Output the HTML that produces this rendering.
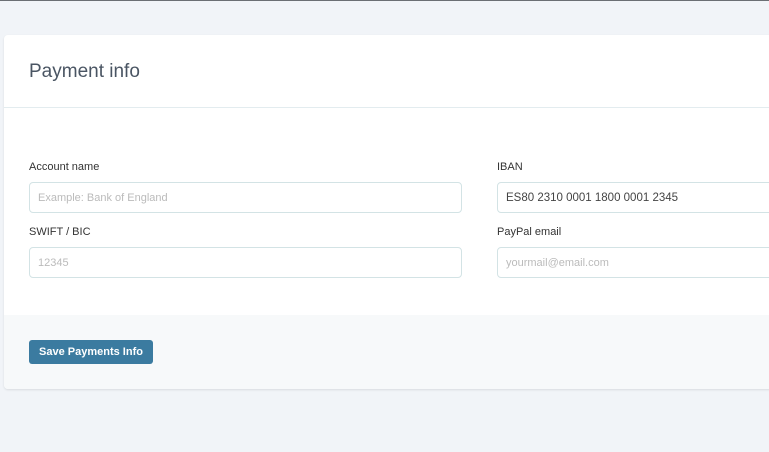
<!DOCTYPE html><html><head><style>
body{margin:0;width:769px;height:452px;background:#f1f4f8;font-family:"Liberation Sans",sans-serif;position:relative;overflow:hidden;border-top:1px solid #6b6f74;box-sizing:border-box}
.card{position:absolute;left:4px;top:34px;width:800px;height:354px;background:#fff;border-radius:4px;box-shadow:0 1px 2px rgba(0,0,0,.1);overflow:hidden}
.hd{height:72px;border-bottom:1px solid #e3ecef}
.hd h1{margin:0;position:absolute;left:25px;top:26px;font-size:19px;font-weight:normal;color:#4a5563}
.ft{position:absolute;left:0;top:280px;width:100%;height:74px;background:#f7f9fa}
.lb{position:absolute;font-size:11px;color:#333}
.in{position:absolute;border:1px solid #d3e3e5;border-radius:4px;box-sizing:border-box;height:31px;font-size:11px;color:#bbb;padding:9px 8px}
.btn{position:absolute;left:25px;top:305px;width:124px;height:24px;background:#3b7ba0;border-radius:3px;color:#fff;font-size:11px;font-weight:bold;text-align:center;line-height:24px}
</style></head><body>
<div class="card">
<div class="hd"><h1>Payment info</h1></div>
<div class="lb" style="left:25px;top:126px">Account name</div>
<div class="in" style="left:25px;top:147px;width:433px">Example: Bank of England</div>
<div class="lb" style="left:25px;top:191px">SWIFT / BIC</div>
<div class="in" style="left:25px;top:212px;width:433px">12345</div>
<div class="lb" style="left:493px;top:126px">IBAN</div>
<div class="in" style="left:493px;top:147px;width:400px;color:#444;font-size:11.5px">ES80 2310 0001 1800 0001 2345</div>
<div class="lb" style="left:493px;top:191px">PayPal email</div>
<div class="in" style="left:493px;top:212px;width:400px">yourmail@email.com</div>
<div class="ft"></div>
<div class="btn">Save Payments Info</div>
</div>
</body></html>
